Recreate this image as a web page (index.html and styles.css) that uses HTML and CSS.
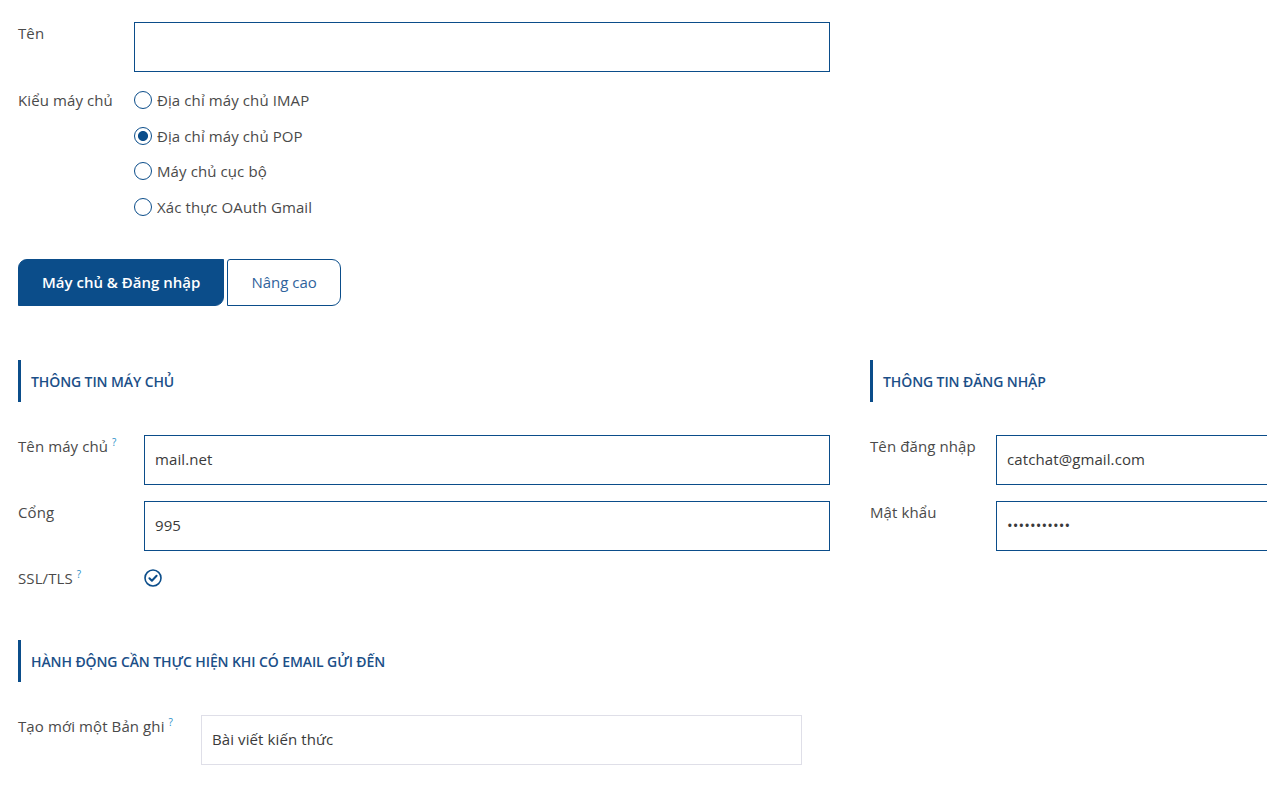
FILE: index.html
```html
<!DOCTYPE html>
<html>
<head>
  <meta charset="UTF-8">
  <title>Máy chủ thư đến</title>
  <link rel="stylesheet" href="styles.css">
</head>
<body>
  <div class="page">
    <div class="top">
      <div class="row row-name">
        <label class="lbl" for="name">Tên</label>
        <input type="text" id="name" class="field field-name">
      </div>
      <div class="row row-type">
        <span class="lbl">Kiểu máy chủ</span>
        <div class="radios">
          <label class="radio"><input type="radio" name="type"> Địa chỉ máy chủ IMAP</label>
          <label class="radio"><input type="radio" name="type" checked> Địa chỉ máy chủ POP</label>
          <label class="radio"><input type="radio" name="type"> Máy chủ cục bộ</label>
          <label class="radio"><input type="radio" name="type"> Xác thực OAuth Gmail</label>
        </div>
      </div>
    </div>

    <div class="tabs">
      <button class="tab active">Máy chủ &amp; Đăng nhập</button>
      <button class="tab">Nâng cao</button>
    </div>

    <div class="columns">
      <div class="col">
        <h3 class="section-title">THÔNG TIN MÁY CHỦ</h3>
        <div class="fields">
          <div class="frow">
            <label class="lbl">Tên máy chủ <sup>?</sup></label>
            <input type="text" class="field" value="mail.net">
          </div>
          <div class="frow">
            <label class="lbl">Cổng</label>
            <input type="text" class="field" value="995">
          </div>
          <div class="frow frow-check">
            <label class="lbl">SSL/TLS <sup>?</sup></label>
            <span class="check">
              <svg width="18" height="18" viewBox="0 0 18 18">
                <circle cx="9" cy="9" r="8" fill="none" stroke="#0b4d8a" stroke-width="1.6"/>
                <path d="M5.4 9.3 L7.9 11.7 L12.6 6.8" fill="none" stroke="#0b4d8a" stroke-width="2" stroke-linecap="round" stroke-linejoin="round"/>
              </svg>
            </span>
          </div>
        </div>
      </div>
      <div class="col">
        <h3 class="section-title">THÔNG TIN ĐĂNG NHẬP</h3>
        <div class="fields">
          <div class="frow">
            <label class="lbl">Tên đăng nhập</label>
            <input type="text" class="field" value="catchat@gmail.com">
          </div>
          <div class="frow">
            <label class="lbl">Mật khẩu</label>
            <input type="password" class="field" value="12345678901">
          </div>
        </div>
      </div>
    </div>

    <div class="action">
      <h3 class="section-title">HÀNH ĐỘNG CẦN THỰC HIỆN KHI CÓ EMAIL GỬI ĐẾN</h3>
      <div class="frow frow-model">
        <label class="lbl">Tạo mới một Bản ghi <sup>?</sup></label>
        <input type="text" class="field field-light" value="Bài viết kiến thức">
      </div>
    </div>
  </div>
</body>
</html>
```

FILE: styles.css
```css
html, body {
  margin: 0;
  padding: 0;
  overflow: hidden;
  background: #fff;
}
body {
  font-family: "Open Sans", "Noto Sans", sans-serif;
  font-size: 15px;
  color: #4a4a4a;
}
.page {
  padding: 22px 0 0 18px;
  width: 1700px;
}
.row {
  display: flex;
}
.lbl {
  display: block;
  line-height: 20px;
  padding-top: 1px;
  color: #4a4a4a;
  letter-spacing: 0.1px;
}
.lbl sup {
  color: #1f8ec8;
  font-size: 10px;
  vertical-align: 6px;
  line-height: 0;
}
.row-name .lbl,
.row-type .lbl {
  width: 116px;
}
.field {
  box-sizing: border-box;
  height: 50px;
  border: 1px solid #0b4d8a;
  border-radius: 0;
  padding: 0 10px 2px;
  font-family: inherit;
  font-size: 15px;
  letter-spacing: 0.1px;
  color: #3a3a3a;
  outline: none;
  background: #fff;
}
.field-name {
  width: 696px;
}
.row-type {
  margin-top: 16px;
}
.row-type .lbl {
  padding-top: 2px;
}
.radios {
  display: flex;
  flex-direction: column;
  gap: 11.5px;
}
.radio {
  display: flex;
  align-items: center;
  height: 24px;
  color: #4a4a4a;
  letter-spacing: 0.1px;
}
.radio input {
  appearance: none;
  -webkit-appearance: none;
  width: 18px;
  height: 18px;
  margin: 0 5px 0 0;
  border: 1.5px solid #0b4d8a;
  border-radius: 50%;
  box-sizing: border-box;
  background: #fff;
}
.radio input:checked {
  background: radial-gradient(circle, #0b4d8a 0 4.6px, #fff 5.4px);
}
.tabs {
  display: flex;
  gap: 3px;
  margin-top: 40px;
}
.tab {
  height: 47px;
  padding: 0 23px;
  font-family: inherit;
  font-size: 15px;
  cursor: pointer;
  background: #fff;
  color: #2f639c;
  border: 1px solid #0b4d8a;
  border-radius: 3px 9px 9px 0;
}
.tab.active {
  background: #0b4d8a;
  color: #fff;
  font-weight: 600;
  border-radius: 9px 0 9px 0;
}
.columns {
  display: grid;
  grid-template-columns: 812px 812px;
  column-gap: 40px;
  margin-top: 54px;
}
.section-title {
  margin: 0;
  height: 42px;
  line-height: 44px;
  border-left: 3px solid #0b4d8a;
  padding-left: 10px;
  font-size: 14px;
  font-weight: 600;
  letter-spacing: -0.1px;
  color: #1b4f88;
}
.fields {
  display: flex;
  flex-direction: column;
  gap: 16px;
  margin-top: 33px;
}
.frow {
  display: grid;
  grid-template-columns: 126px 1fr;
}
.frow-check {
  height: 22px;
  align-items: center;
}
.frow-check .lbl {
  padding-top: 0;
}
.check {
  display: flex;
  align-items: center;
}
.check svg {
  display: block;
}
.action {
  margin-top: 51px;
}
.frow-model {
  grid-template-columns: 183px 601px;
  margin-top: 33px;
}
.field-light {
  border-color: #dfdfe8;
}
```
